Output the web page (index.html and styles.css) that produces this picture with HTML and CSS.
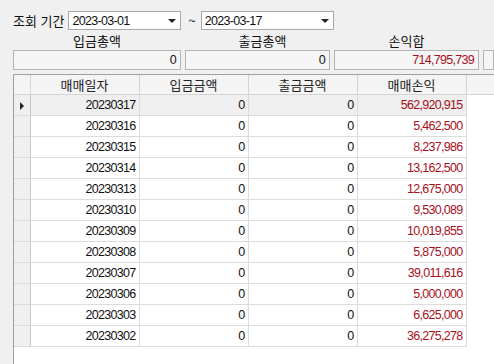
FILE: index.html
```html
<!DOCTYPE html>
<html lang="ko">
<head>
    <meta charset="UTF-8">
    <title>매매손익 조회</title>
    <link rel="stylesheet" href="styles.css">
</head>
<body>
    <div class="search-bar">
        <span class="search-label">조회 기간</span>
        <div class="combo combo-from">
            <span>2023-03-01</span>
            <span class="combo-arrow"></span>
        </div>
        <span class="tilde">~</span>
        <div class="combo combo-to">
            <span>2023-03-17</span>
            <span class="combo-arrow"></span>
        </div>
    </div>

    <div class="summary">
        <div class="summary-label">입금총액</div>
        <div class="summary-label shift">출금총액</div>
        <div class="summary-label">손익합</div>
        <div class="summary-label"></div>
        <div class="summary-box num">0</div>
        <div class="summary-box num">0</div>
        <div class="summary-box num red">714,795,739</div>
        <div class="summary-box"></div>
    </div>

    <div class="grid">
        <table>
            <colgroup>
                <col class="col-rowhead">
                <col class="col-data">
                <col class="col-data">
                <col class="col-data">
                <col class="col-data">
                <col>
            </colgroup>
            <thead>
                <tr>
                    <th></th>
                    <th>매매일자</th>
                    <th>입금금액</th>
                    <th>출금금액</th>
                    <th>매매손익</th>
                    <th class="filler"></th>
                </tr>
            </thead>
            <tbody>
                <tr class="current">
                    <td class="rowhead"><span class="row-pointer"></span></td>
                    <td>20230317</td><td>0</td><td>0</td><td class="red">562,920,915</td><td class="empty"></td>
                </tr>
                <tr>
                    <td class="rowhead"></td>
                    <td>20230316</td><td>0</td><td>0</td><td class="red">5,462,500</td><td class="empty"></td>
                </tr>
                <tr>
                    <td class="rowhead"></td>
                    <td>20230315</td><td>0</td><td>0</td><td class="red">8,237,986</td><td class="empty"></td>
                </tr>
                <tr>
                    <td class="rowhead"></td>
                    <td>20230314</td><td>0</td><td>0</td><td class="red">13,162,500</td><td class="empty"></td>
                </tr>
                <tr>
                    <td class="rowhead"></td>
                    <td>20230313</td><td>0</td><td>0</td><td class="red">12,675,000</td><td class="empty"></td>
                </tr>
                <tr>
                    <td class="rowhead"></td>
                    <td>20230310</td><td>0</td><td>0</td><td class="red">9,530,089</td><td class="empty"></td>
                </tr>
                <tr>
                    <td class="rowhead"></td>
                    <td>20230309</td><td>0</td><td>0</td><td class="red">10,019,855</td><td class="empty"></td>
                </tr>
                <tr>
                    <td class="rowhead"></td>
                    <td>20230308</td><td>0</td><td>0</td><td class="red">5,875,000</td><td class="empty"></td>
                </tr>
                <tr>
                    <td class="rowhead"></td>
                    <td>20230307</td><td>0</td><td>0</td><td class="red">39,011,616</td><td class="empty"></td>
                </tr>
                <tr>
                    <td class="rowhead"></td>
                    <td>20230306</td><td>0</td><td>0</td><td class="red">5,000,000</td><td class="empty"></td>
                </tr>
                <tr>
                    <td class="rowhead"></td>
                    <td>20230303</td><td>0</td><td>0</td><td class="red">6,625,000</td><td class="empty"></td>
                </tr>
                <tr>
                    <td class="rowhead"></td>
                    <td>20230302</td><td>0</td><td>0</td><td class="red">36,275,278</td><td class="empty"></td>
                </tr>
            </tbody>
        </table>
    </div>
</body>
</html>
```

FILE: styles.css
```css
html, body {
    height: 100%;
}

body {
    margin: 0;
    background: #f0f0f0;
    font-family: "Noto Sans CJK KR", "DejaVu Sans", sans-serif;
    font-size: 13px;
    color: #111;
    display: flex;
    flex-direction: column;
    overflow: hidden;
}

.num, td, .combo {
    font-family: "Liberation Sans", "Noto Sans CJK KR", sans-serif;
    font-size: 12.5px;
    letter-spacing: -0.7px;
}

.red {
    color: #a8101c;
}

.search-bar {
    display: flex;
    align-items: center;
    margin: 11px 0 0 13px;
    height: 19px;
}

.search-label {
    font-size: 13px;
    margin-right: 4px;
}

.combo {
    height: 17px;
    border: 1px solid #a9a9a9;
    background: #fff;
    display: flex;
    align-items: center;
    justify-content: space-between;
    padding: 0 4px 0 3px;
}

.combo-from {
    width: 104px;
}

.combo-to {
    width: 124px;
}

.combo-arrow {
    width: 0;
    height: 0;
    border-left: 4px solid transparent;
    border-right: 4px solid transparent;
    border-top: 4px solid #222;
}

.tilde {
    margin: 0 5px 0 7px;
}

.summary {
    display: grid;
    grid-template-columns: 168px 145px 145px 1fr;
    column-gap: 4px;
    row-gap: 1px;
    margin: 2px 0 0 13px;
}

.summary-label {
    text-align: center;
    height: 17px;
    line-height: 17px;
}

.summary-label.shift {
    padding-left: 10px;
}

.summary-box {
    height: 18px;
    line-height: 18px;
    border: 1px solid #b4b4b4;
    background: #f5f5f5;
    text-align: right;
    padding-right: 4px;
}

.grid {
    flex: 1;
    margin: 4px 0 0 13px;
    border-left: 1px solid #a0a0a0;
    border-top: 1px solid #a0a0a0;
    background: #fff;
}

table {
    border-collapse: collapse;
    table-layout: fixed;
    width: 100%;
}

.col-rowhead {
    width: 16px;
}

.col-data {
    width: 109px;
}

th {
    height: 19px;
    padding: 0;
    font-weight: normal;
    font-size: 13px;
    background: #f4f4f4;
    border-right: 1px solid #d4d4d4;
    border-bottom: 1px solid #d4d4d4;
    color: #222;
}

th.filler {
    border-right: none;
}

td {
    height: 20px;
    padding: 0 3px 0 0;
    text-align: right;
    border-right: 1px solid #dcdcdc;
    border-bottom: 1px solid #dcdcdc;
}

td.rowhead {
    background: #f0f0f2;
    text-align: center;
    padding: 0;
    border-right: 1px solid #c8c8c8;
}

td.empty {
    border: none;
    background: #fff;
}

tr.current td {
    background: #efefef;
}

tr.current td.empty {
    background: #fff;
}

.row-pointer {
    display: inline-block;
    width: 0;
    height: 0;
    border-top: 4px solid transparent;
    border-bottom: 4px solid transparent;
    border-left: 4px solid #222;
    vertical-align: middle;
}
```
